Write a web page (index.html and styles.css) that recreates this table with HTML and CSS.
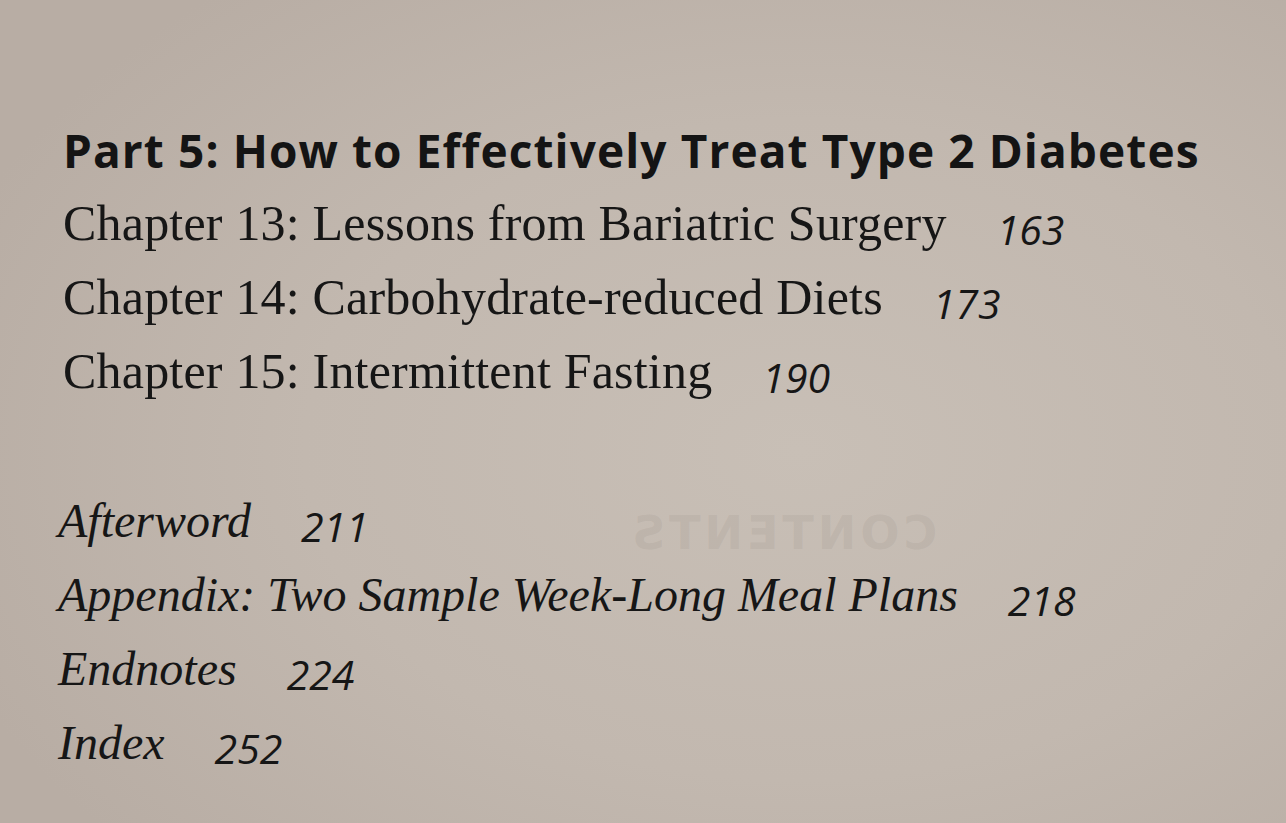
FILE: index.html
```html
<!DOCTYPE html>
<html lang="en">
<head>
<meta charset="utf-8">
<title>Contents</title>
<link rel="stylesheet" href="styles.css">
</head>
<body>
<main class="page">
  <div class="ghost">CONTENTS</div>
  <section class="part">
    <h2 class="part-title">Part 5: How to Effectively Treat Type 2 Diabetes</h2>
    <ul class="toc">
      <li class="row"><span class="chap">Chapter 13: Lessons from Bariatric Surgery</span><span class="num">163</span></li>
      <li class="row"><span class="chap">Chapter 14: Carbohydrate-reduced Diets</span><span class="num">173</span></li>
      <li class="row"><span class="chap">Chapter 15: Intermittent Fasting</span><span class="num">190</span></li>
    </ul>
  </section>
  <section class="back">
    <ul class="toc">
      <li class="row"><span class="ital">Afterword</span><span class="num">211</span></li>
      <li class="row"><span class="ital">Appendix: Two Sample Week-Long Meal Plans</span><span class="num">218</span></li>
      <li class="row"><span class="ital">Endnotes</span><span class="num">224</span></li>
      <li class="row"><span class="ital">Index</span><span class="num">252</span></li>
    </ul>
  </section>
</main>
</body>
</html>
```
FILE: styles.css
```css
html, body {
  margin: 0;
  padding: 0;
}
body {
  width: 1286px;
  height: 823px;
  overflow: hidden;
  background: radial-gradient(ellipse 900px 600px at 800px 450px, #c8bfb6 0%, #c2b8af 55%, #b8ada4 100%);
  color: #111;
}
.page {
  position: relative;
  height: 823px;
  box-sizing: border-box;
  padding: 114px 0 0 63px;
}
.ghost {
  position: absolute;
  left: 628px;
  top: 506px;
  font-family: "DejaVu Sans", sans-serif;
  font-weight: bold;
  font-size: 46px;
  letter-spacing: 4px;
  color: rgba(150, 140, 132, 0.18);
  transform: scaleX(-1);
}
.part-title {
  margin: 0;
  font-family: "Open Sans", sans-serif;
  font-weight: 700;
  font-size: 46px;
  line-height: 72px;
  letter-spacing: 1.1px;
  color: #141414;
}
.toc {
  list-style: none;
  margin: 0;
  padding: 0;
}
.row {
  display: flex;
  align-items: baseline;
  gap: 50px;
  height: 74px;
  line-height: 74px;
}
.chap {
  font-family: "Liberation Serif", serif;
  font-size: 50px;
  letter-spacing: 0.2px;
  color: #161616;
}
.ital {
  font-family: "Liberation Serif", serif;
  font-style: italic;
  font-size: 48px;
  color: #161616;
}
.num {
  font-family: "Open Sans", sans-serif;
  font-style: italic;
  font-size: 41px;
  color: #161616;
  position: relative;
  top: 5px;
}
.back {
  margin: 76px 0 0 -5px;
}
```
